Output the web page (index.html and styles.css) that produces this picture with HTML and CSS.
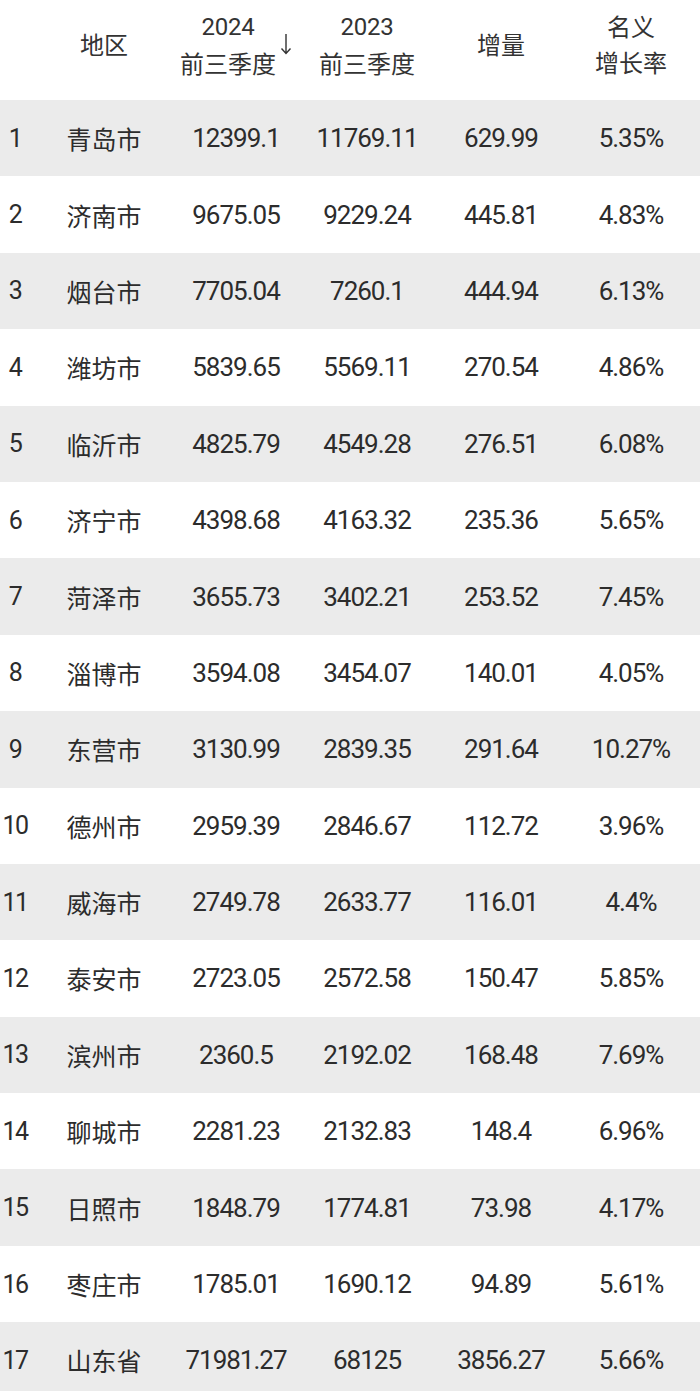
FILE: index.html
```html
<!DOCTYPE html>
<html lang="zh">
<head>
<meta charset="utf-8">
<title>山东省各市前三季度GDP</title>
<link rel="stylesheet" href="styles.css">
</head>
<body>
<div class="table">
  <div class="head">
    <div class="hc"></div>
    <div class="hc"><span>地区</span></div>
    <div class="hc sorted"><span class="two"><span class="num">2024</span><br>前三季度</span><svg class="arrow" width="12" height="24" viewBox="0 0 12 24"><path d="M6 2 V21 M1.5 16.5 L6 21.5 L10.5 16.5" fill="none" stroke="#333" stroke-width="1.4"/></svg></div>
    <div class="hc"><span class="two"><span class="num">2023</span><br>前三季度</span></div>
    <div class="hc"><span>增量</span></div>
    <div class="hc"><span class="two">名义<br>增长率</span></div>
  </div>
  <div class="row odd"><div class="c idx">1</div><div class="c zh">青岛市</div><div class="c">12399.1</div><div class="c">11769.11</div><div class="c">629.99</div><div class="c">5.35%</div></div>
  <div class="row"><div class="c idx">2</div><div class="c zh">济南市</div><div class="c">9675.05</div><div class="c">9229.24</div><div class="c">445.81</div><div class="c">4.83%</div></div>
  <div class="row odd"><div class="c idx">3</div><div class="c zh">烟台市</div><div class="c">7705.04</div><div class="c">7260.1</div><div class="c">444.94</div><div class="c">6.13%</div></div>
  <div class="row"><div class="c idx">4</div><div class="c zh">潍坊市</div><div class="c">5839.65</div><div class="c">5569.11</div><div class="c">270.54</div><div class="c">4.86%</div></div>
  <div class="row odd"><div class="c idx">5</div><div class="c zh">临沂市</div><div class="c">4825.79</div><div class="c">4549.28</div><div class="c">276.51</div><div class="c">6.08%</div></div>
  <div class="row"><div class="c idx">6</div><div class="c zh">济宁市</div><div class="c">4398.68</div><div class="c">4163.32</div><div class="c">235.36</div><div class="c">5.65%</div></div>
  <div class="row odd"><div class="c idx">7</div><div class="c zh">菏泽市</div><div class="c">3655.73</div><div class="c">3402.21</div><div class="c">253.52</div><div class="c">7.45%</div></div>
  <div class="row"><div class="c idx">8</div><div class="c zh">淄博市</div><div class="c">3594.08</div><div class="c">3454.07</div><div class="c">140.01</div><div class="c">4.05%</div></div>
  <div class="row odd"><div class="c idx">9</div><div class="c zh">东营市</div><div class="c">3130.99</div><div class="c">2839.35</div><div class="c">291.64</div><div class="c">10.27%</div></div>
  <div class="row"><div class="c idx">10</div><div class="c zh">德州市</div><div class="c">2959.39</div><div class="c">2846.67</div><div class="c">112.72</div><div class="c">3.96%</div></div>
  <div class="row odd"><div class="c idx">11</div><div class="c zh">威海市</div><div class="c">2749.78</div><div class="c">2633.77</div><div class="c">116.01</div><div class="c">4.4%</div></div>
  <div class="row"><div class="c idx">12</div><div class="c zh">泰安市</div><div class="c">2723.05</div><div class="c">2572.58</div><div class="c">150.47</div><div class="c">5.85%</div></div>
  <div class="row odd"><div class="c idx">13</div><div class="c zh">滨州市</div><div class="c">2360.5</div><div class="c">2192.02</div><div class="c">168.48</div><div class="c">7.69%</div></div>
  <div class="row"><div class="c idx">14</div><div class="c zh">聊城市</div><div class="c">2281.23</div><div class="c">2132.83</div><div class="c">148.4</div><div class="c">6.96%</div></div>
  <div class="row odd"><div class="c idx">15</div><div class="c zh">日照市</div><div class="c">1848.79</div><div class="c">1774.81</div><div class="c">73.98</div><div class="c">4.17%</div></div>
  <div class="row"><div class="c idx">16</div><div class="c zh">枣庄市</div><div class="c">1785.01</div><div class="c">1690.12</div><div class="c">94.89</div><div class="c">5.61%</div></div>
  <div class="row odd"><div class="c idx">17</div><div class="c zh">山东省</div><div class="c">71981.27</div><div class="c">68125</div><div class="c">3856.27</div><div class="c">5.66%</div></div>
</div>
</body>
</html>
```

FILE: styles.css
```css
html, body {
  margin: 0;
  padding: 0;
  background: #ffffff;
}
body {
  width: 700px;
  height: 1391px;
  overflow: hidden;
  color: #2c2c2c;
  font-family: Roboto, "Noto Sans CJK SC", sans-serif;
}
.table {
  display: flex;
  flex-direction: column;
}
.head,
.row {
  display: grid;
  grid-template-columns: 30px 148px 116px 146px 122px 138px;
}
.head {
  height: 100px;
  box-sizing: border-box;
  padding-bottom: 12px;
}
.hc {
  display: flex;
  align-items: center;
  justify-content: center;
  min-width: 0;
  white-space: nowrap;
  font-family: "Noto Sans CJK SC", sans-serif;
  font-size: 24px;
  line-height: 36px;
  color: #333333;
  text-align: center;
}
.hc .num {
  font-family: Roboto, sans-serif;
  font-size: 24px;
  letter-spacing: -0.3px;
}
.sorted {
  gap: 4px;
}
.arrow {
  display: block;
  flex: none;
  margin-top: -1px;
}
.row {
  height: 76.4px;
}
.row.odd {
  background: #ebebeb;
}
.c {
  display: flex;
  align-items: center;
  justify-content: center;
  font-size: 26px;
  letter-spacing: -1px;
  white-space: nowrap;
}
.c.zh {
  font-family: "Noto Sans CJK SC", sans-serif;
  font-size: 25px;
  letter-spacing: 0;
}
.c.idx {
  font-size: 25px;
  letter-spacing: -1.5px;
}
```
